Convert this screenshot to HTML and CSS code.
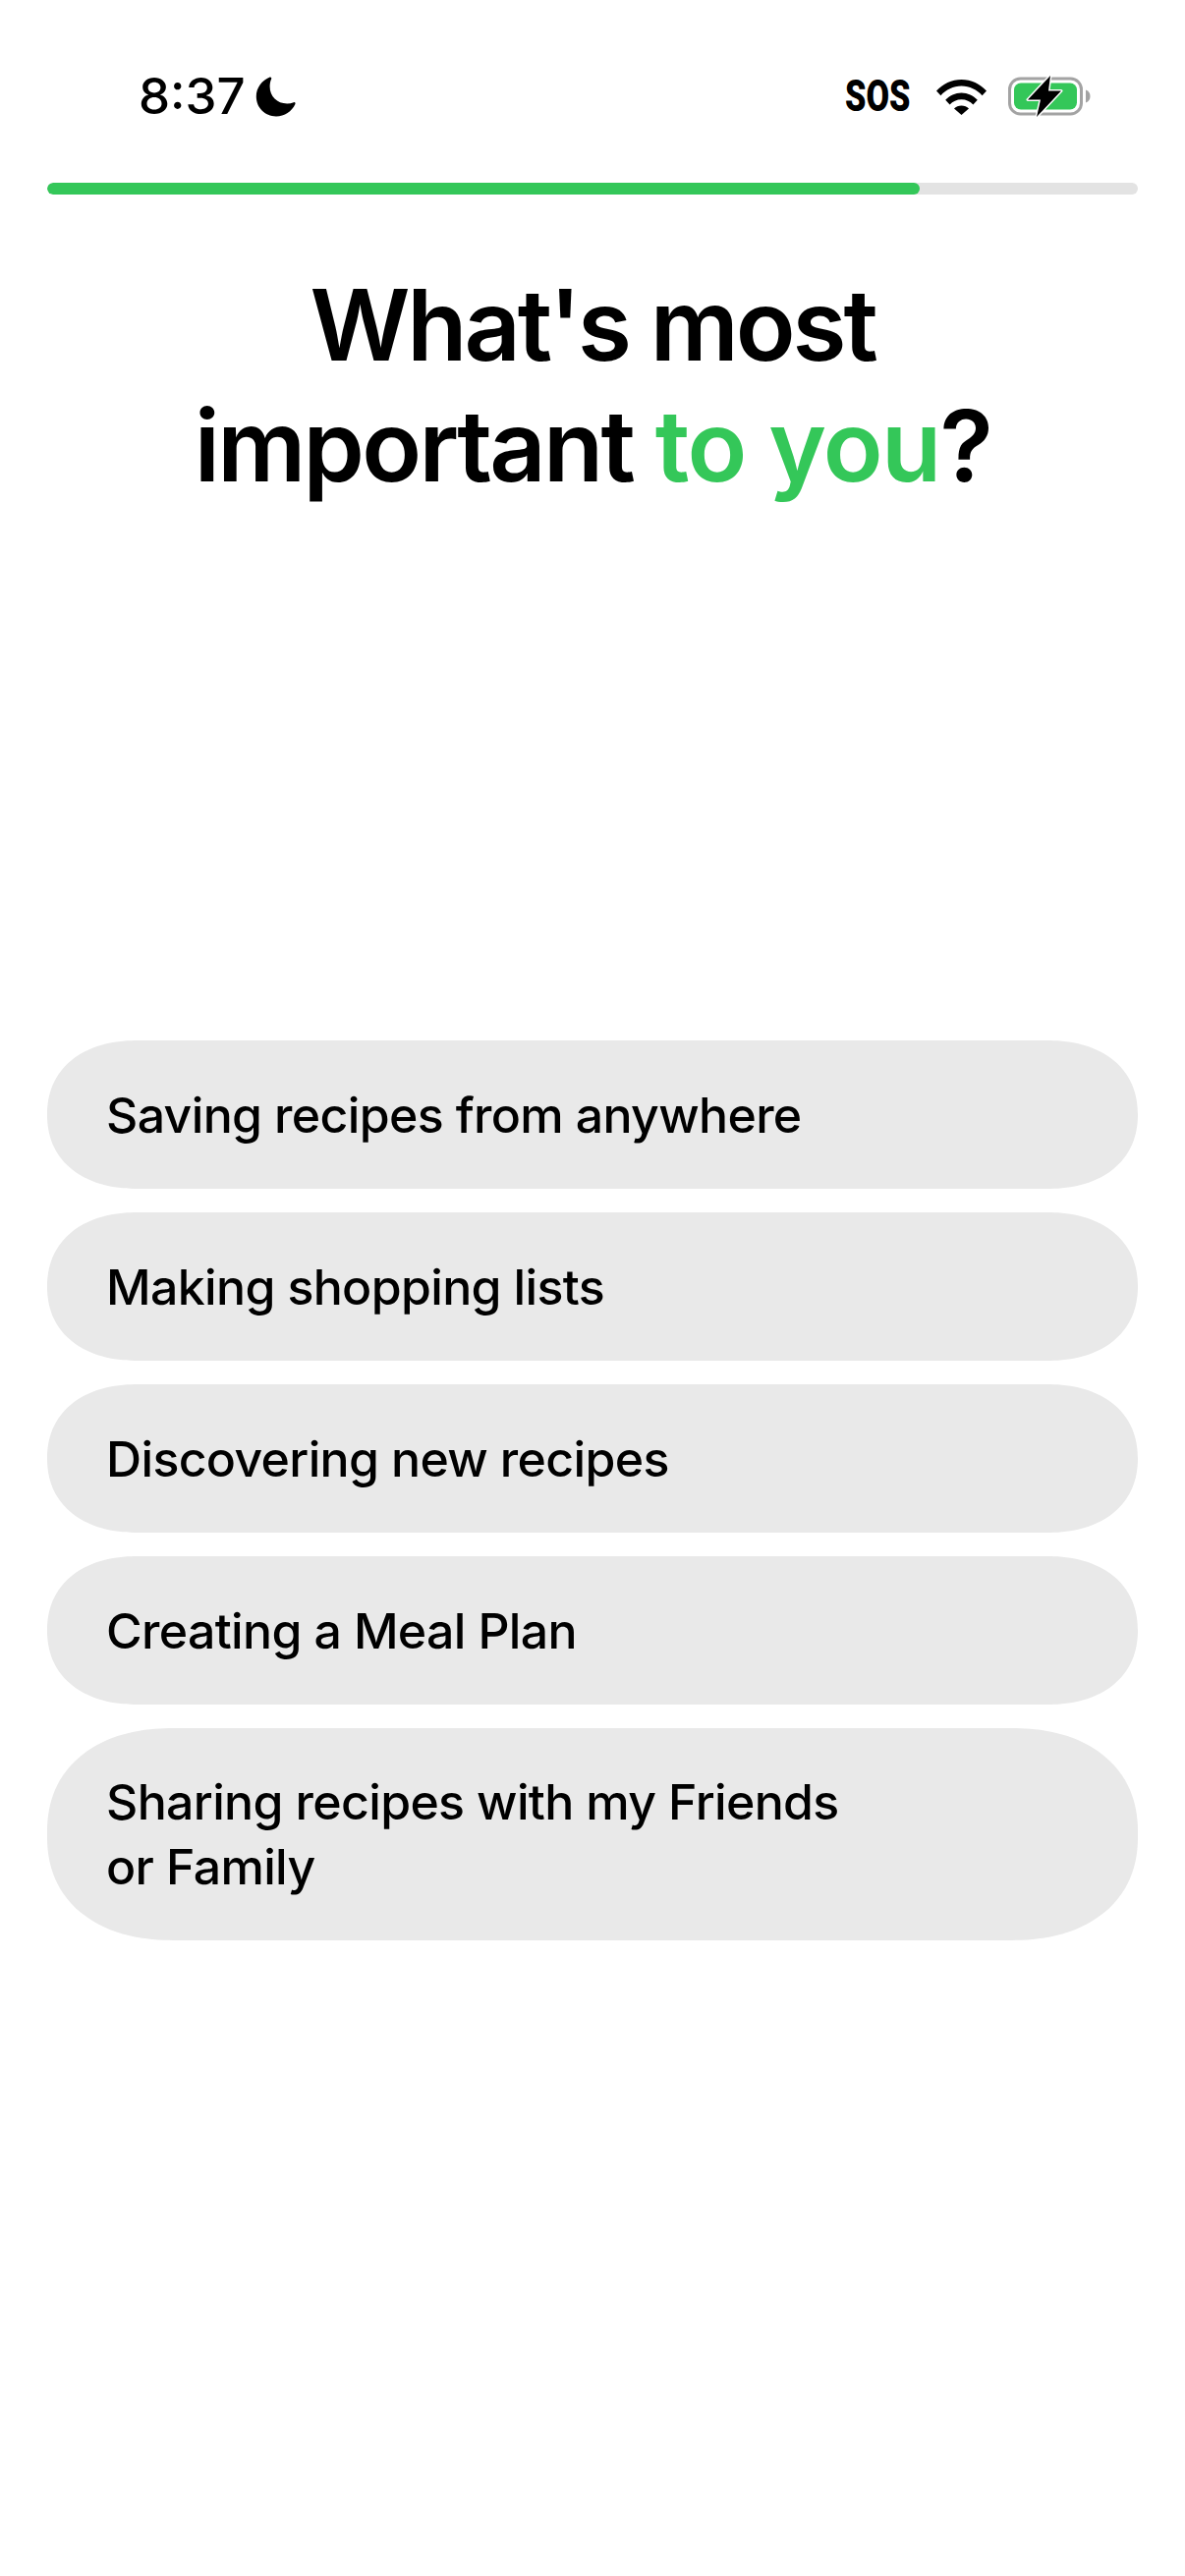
FILE: index.html
```html
<!DOCTYPE html>
<html lang="en">
<head>
<meta charset="utf-8">
<title>What's most important to you?</title>
<link rel="stylesheet" href="styles.css">
</head>
<body>
<div class="page">
  <header class="status">
    <div class="status-left">
      <span class="time">8:37</span>
      <svg class="moon" viewBox="0 0 41 41"><path d="M14.6 .6C15.6 .2 16.6 1.1 16.2 2.2C15.1 4.6 14.6 7.2 14.6 10C14.6 20.3 22 27.4 32.2 27.4C34.6 27.4 36.8 27 38.8 26.2C40 25.7 41 26.8 40.4 28C37 35.4 29.6 40.4 21 40.4C9.6 40.4 .8 31.4 .8 20.2C.8 11.6 6.6 3.8 14.6 .6Z"/></svg>
    </div>
    <div class="status-right">
      <span class="sos">SOS</span>
      <svg class="wifi" viewBox="0 0 51 37"><path d="M0 12.6C6.6 5.4 15.6 1 25.5 1S44.4 5.4 51 12.6L46.6 17.2C41.2 11.4 33.8 7.6 25.5 7.6S9.8 11.4 4.4 17.2Z"/><path d="M9.2 21.8C13.4 17.2 19.2 14.4 25.5 14.4S37.6 17.2 41.8 21.8L37.4 26.4C34.4 23.2 30.2 21.2 25.5 21.2S16.6 23.2 13.6 26.4Z"/><path d="M18 30.6C19.9 28.7 22.6 27.6 25.5 27.6S31.1 28.7 33 30.6L25.5 37Z"/></svg>
      <svg class="battery" viewBox="0 0 84 42">
        <rect x="1.5" y="3" width="73" height="36" rx="11" fill="none" stroke="#a3a3a3" stroke-width="3"/>
        <rect x="6" y="7.5" width="64" height="27" rx="7" fill="#34c759"/>
        <path d="M79 14.5C82 15.5 83.5 18 83.5 21S82 26.5 79 27.5Z" fill="#a3a3a3"/>
        <path d="M43 0L20 24.5H33L29 42L54 15.5H41Z" fill="#000" stroke="#fff" stroke-width="3" paint-order="stroke" stroke-linejoin="round"/>
      </svg>
    </div>
  </header>

  <div class="progress"><div class="progress-fill"></div></div>

  <h1 class="title"><span class="tight">What's most</span><br>important <span class="accent">to you</span>?</h1>

  <ul class="options">
    <li class="option">Saving recipes from anywhere</li>
    <li class="option">Making shopping lists</li>
    <li class="option">Discovering new recipes</li>
    <li class="option">Creating a Meal Plan</li>
    <li class="option option-tall">Sharing recipes with my Friends<br>or Family</li>
  </ul>
</div>
</body>
</html>
```
FILE: styles.css
```css
* { box-sizing: border-box; }
html, body { margin: 0; padding: 0; background: #fff; }
.page {
  width: 1206px;
  height: 2622px;
  overflow: hidden;
  font-family: Inter, "Liberation Sans", sans-serif;
  color: #000;
}
.status {
  height: 186px;
  padding: 78px 96px 0 141px;
  display: flex;
  justify-content: space-between;
  align-items: flex-start;
}
.status-left { display: flex; align-items: center; gap: 10px; height: 40px; }
.time { font-size: 51px; font-weight: 500; line-height: 40px; }
.moon { width: 41px; height: 41px; display: block; }
.status-right { display: flex; align-items: center; height: 40px; }
.sos {
  font-family: Roboto, "Liberation Sans", sans-serif;
  font-size: 45px;
  font-weight: 900;
  line-height: 40px;
  width: 66px;
  transform: scaleX(.76);
  transform-origin: left center;
  white-space: nowrap;
  margin-right: 27px;
}
.wifi { width: 51px; height: 37px; display: block; margin-right: 22px; }
.battery { width: 84px; height: 42px; display: block; }
.progress {
  height: 12px;
  margin: 0 48px;
  background: #e3e3e3;
  border-radius: 6px;
  overflow: hidden;
}
.progress-fill { width: 80%; height: 100%; background: #34c759; border-radius: 6px; }
.title {
  margin: 71px 0 0;
  text-align: center;
  font-size: 100px;
  font-weight: 600;
  line-height: 123px;
  letter-spacing: -2.7px;
}
.tight { letter-spacing: -3.1px; }
.accent { color: #34c759; letter-spacing: -1.6px; }
.options {
  list-style: none;
  padding: 0 48px;
  display: flex;
  flex-direction: column;
  gap: 24px;
  margin: 544px 0 0;
}
.option {
  height: 151px;
  padding: 0 60px;
  display: flex;
  align-items: center;
  background: #e9e9e9;
  border-radius: 92px / 75.5px;
  corner-shape: superellipse(1.15);
  font-size: 50px;
  font-weight: 450;
  line-height: 66px;
  letter-spacing: -0.65px;
}
.option-tall { display: block; height: 216px; padding-top: 42px; padding-bottom: 42px; border-radius: 128px / 105px; }
```
